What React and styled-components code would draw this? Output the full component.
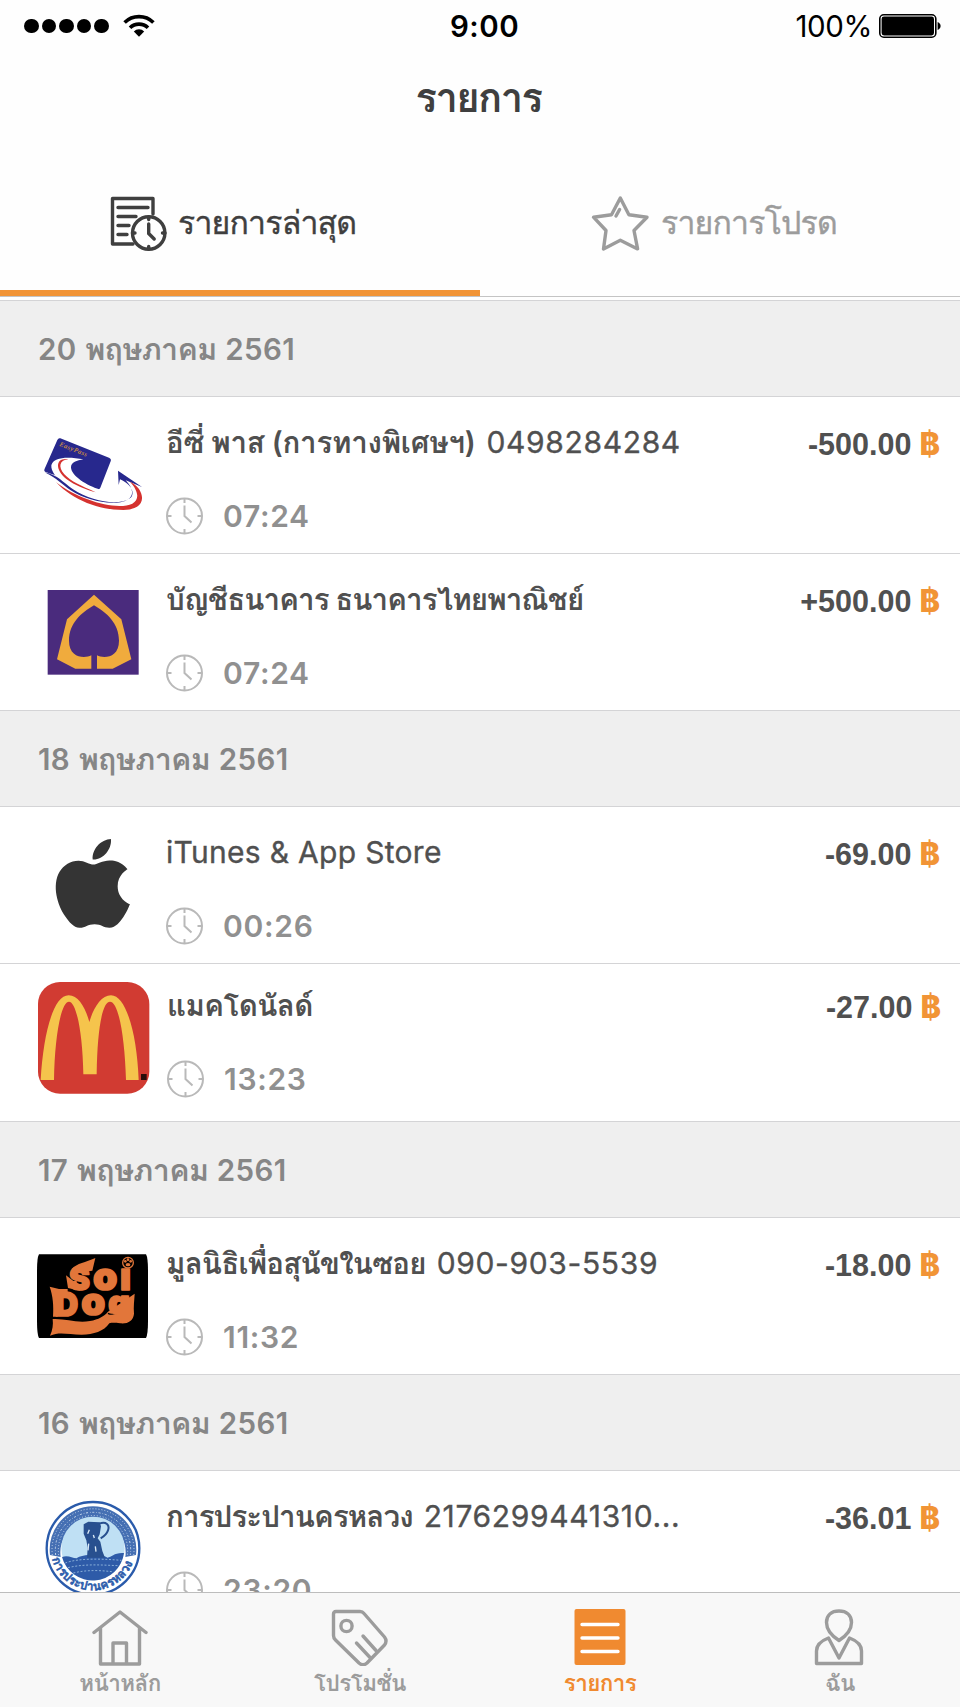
import React, { useState } from "react";
import styled, { createGlobalStyle } from "styled-components";

const Colors = {
  primary: "#f19436",
  active: "#f08a30",
  heading: "#3f3f3f",
  text: "#505050",
  muted: "#909090",
  icon: "#9c9c9c",
  section: "#efefef",
  border: "#d4d4d6",
  bar: "#f8f8f8",
};

const GlobalStyle = createGlobalStyle`
  * {
    box-sizing: border-box;
  }

  body {
    margin: 0;
    background: #fff;
    font-family: Inter, Loma, sans-serif;
  }
`;

const Screen = styled.div`
  width: 960px;
  height: 1707px;
  display: flex;
  flex-direction: column;
  overflow: hidden;
  background: #fefefe;
`;

const StatusBar = styled.div`
  height: 52px;
  padding: 0 19px 0 24px;
  display: grid;
  grid-template-columns: 1fr auto 1fr;
  align-items: center;
  color: #000;
  font-size: 29.5px;
  line-height: 52px;
`;

const StatusSide = styled.div`
  display: flex;
  align-items: center;
  justify-content: ${(p) => (p.$right ? "flex-end" : "flex-start")};
  gap: ${(p) => (p.$right ? "7px" : "14px")};
  letter-spacing: -0.4px;
`;

const SignalDots = styled.div`
  display: flex;
  gap: 3px;
`;

const Dot = styled.span`
  width: 14.6px;
  height: 14.6px;
  border-radius: 50%;
  background: #000;
`;

const Clock = styled.div`
  padding-left: 4px;
  font-weight: 600;
  letter-spacing: 0.5px;
`;

const Title = styled.h1`
  height: 112px;
  margin: 0;
  padding: 18px 3px 0 0;
  text-align: center;
  color: ${Colors.heading};
  font-size: 40px;
  font-weight: 600;
  line-height: 56px;
  letter-spacing: -1.6px;
`;

const Tabs = styled.div`
  height: 133px;
  display: flex;
  border-bottom: 1px solid #c4c4c4;
`;

const Tab = styled.button`
  width: 50%;
  height: 132px;
  display: flex;
  align-items: center;
  gap: ${(p) => (p.$active ? "11px" : "10px")};
  padding: 0 0 9px ${(p) => (p.$active ? "109px" : "111px")};
  border: 0;
  border-bottom: 6px solid ${(p) => (p.$active ? Colors.primary : "transparent")};
  background: none;
  color: ${(p) => (p.$active ? Colors.heading : Colors.icon)};
  font-family: inherit;
  font-size: 32px;
  line-height: 48px;
  letter-spacing: -0.8px;
  -webkit-text-stroke: 0.4px currentColor;
`;

const List = styled.div`
  flex: 1;
  min-height: 0;
  margin-top: 3px;
  overflow: hidden;
`;

const SectionHeader = styled.h2`
  height: 96px;
  margin: 0;
  padding: 1px 38px 0;
  display: flex;
  align-items: center;
  gap: 8.5px;
  border-top: 1px solid ${Colors.border};
  background: ${Colors.section};
  color: #868686;
  font-size: 29.5px;
  font-weight: 600;
  line-height: 40px;
  letter-spacing: 0.4px;
`;

const Month = styled.span`
  font-size: 30.5px;
  letter-spacing: -0.7px;
`;

const Row = styled.div`
  height: 157.15px;
  padding: ${(p) => (p.$raised ? "0 19px 8px 38px" : "0 20px 0 37px")};
  display: flex;
  align-items: center;
  border-top: 1px solid ${Colors.border};
  background: #fff;
`;

const Logo = styled.svg`
  flex: none;
  width: 112px;
  height: 112px;
`;

const Details = styled.div`
  flex: 1;
  height: 112px;
  padding-left: 17px;
  display: flex;
  flex-direction: column;
`;

const Name = styled.div`
  margin-top: 2px;
  color: ${Colors.text};
  font-size: 30px;
  line-height: 42px;
  white-space: nowrap;
`;

const ThaiName = styled.span`
  font-size: 29.5px;
  font-weight: 600;
  letter-spacing: ${(p) => p.$spacing ?? -0.9}px;
`;

const Reference = styled.span`
  margin-left: ${(p) => (p.$after ? "11px" : 0)};
  letter-spacing: ${(p) => (p.$after ? "0.65px" : "0.3px")};
  -webkit-text-stroke: 0.35px currentColor;
`;

const Time = styled.div`
  margin-top: 34px;
  display: flex;
  align-items: center;
  gap: 19px;
  color: ${Colors.muted};
  font-size: 30px;
  font-weight: 600;
  line-height: 38px;
  letter-spacing: 0.7px;
`;

const Amount = styled.div`
  height: 112px;
  padding-top: 6px;
  display: flex;
  gap: 8px;
  color: ${Colors.text};
  font-family: "Liberation Sans", Arial, sans-serif;
  font-size: 30.5px;
  font-weight: 700;
  line-height: 38px;
`;

const Baht = styled.span`
  color: ${Colors.primary};
  font-family: Inter, sans-serif;
  font-size: 31px;
  font-weight: 800;
`;

const TabBar = styled.nav`
  flex: none;
  height: 115px;
  display: flex;
  border-top: 1px solid #bdbdbd;
  background: ${Colors.bar};
`;

const TabBarItem = styled.button`
  flex: 1;
  display: flex;
  flex-direction: column;
  align-items: center;
  padding: 15px 0 0;
  border: 0;
  background: none;
  color: ${(p) => (p.$active ? Colors.active : Colors.icon)};
  font-family: inherit;
  font-size: 22.5px;
  font-weight: 600;
  line-height: 33px;
  letter-spacing: -0.6px;
`;

const WifiIcon = () => (
  <svg width="32" height="24" viewBox="0 0 32 24">
    <g fill="none" stroke="#000" strokeWidth="3.6">
      <path d="M1.6 8.6a20.4 20.4 0 0 1 28.8 0" />
      <path d="M7 13.8a12.8 12.8 0 0 1 18 0" />
    </g>
    <path d="M10.8 17.4a7.4 7.4 0 0 1 10.4 0L16 22.8z" />
  </svg>
);

const BatteryIcon = () => (
  <svg width="62" height="24" viewBox="0 0 62 24">
    <rect x="0.8" y="0.8" width="56" height="22.4" rx="4" fill="#fff" stroke="#000" strokeWidth="1.6" />
    <rect x="2.6" y="2.6" width="52.4" height="18.8" rx="2.4" />
    <path d="M58.6 8c4 1.6 4 6.4 0 8z" />
  </svg>
);

const HistoryIcon = () => (
  <svg width="58" height="58" viewBox="0 0 58 58" fill="none" stroke="currentColor" strokeWidth="3.4" strokeLinecap="round">
    <path d="M44 20V4.5H3.5v45.5H24" strokeLinejoin="round" />
    <path d="M9 13.5h30M9 22.5h18M9 31.5h11M9 40.5h9" />
    <circle cx="39.7" cy="39" r="16.2" />
    <path d="M39.7 30v9.5l5.5 5.5M39.7 23v2.5M39.7 52.5v2.5M23.5 39h2.5M53.5 39h2.5" />
  </svg>
);

const StarIcon = () => (
  <svg width="60" height="58" viewBox="0 0 60 58" fill="none" stroke="currentColor" strokeWidth="3.4" strokeLinejoin="round" strokeLinecap="round">
    <path d="M29.3 4l8.6 16.8L56 23.2 43 36.5l3.6 18.4-17.3-8.7L12.5 54.9 15 36.5 2.5 23.2l18-2.4z" />
    <path d="M28.6 15.5l-3.6 6.5" />
  </svg>
);

const ClockIcon = () => (
  <svg width="38" height="38" viewBox="0 0 38 38" fill="none" stroke="#b9b9b9" strokeWidth="2">
    <circle cx="18.5" cy="19" r="17.5" />
    <path d="M18.5 8.5V19l7 6.500M18.5 1.500v4.500M18.5 32v4.500M1 19h4.500M31.500 19H36" />
  </svg>
);

const EasyPassLogo = () => (
  <Logo viewBox="111 86 336 336">
    <path d="M181 144l146 58q8 4 5 11l-31 79q-3 7-9 5l-153-51q-9-3-5-11l38-86q3-7 9-5z" fill="#27288d" />
    <path d="M250 207c-44-8-90-8-96 18-3 34 60 85 150 105l50-14-53-18c-40-11-88-42-88-67 0-15 18-21 37-24z" fill="#fff" />
    <path d="M205 207c-38-6-42 30-6 59 26 20 58 31 88 40-44-20-74-32-94-54-20-23-14-43 12-45z" fill="#d5322f" />
    <path d="M134 246c42 10 52 28 85 51 58 38 139 51 172 26 12-10 7-31-9-43-8-6-16-11-22-13l-4 17-2-43 72 49-49-20c23 23 26 47 6 58-40 21-120 5-171-28-24-16-42-37-78-54z" fill="#27288d" />
    <path d="M168 276c52 55 129 83 202 83 48 0 70-26 47-63-9-12-17-18-27-22 25 27 30 53 7 66-47 22-159-10-229-64z" fill="#d5322f" />
    <text x="177" y="166" transform="rotate(22 177 166)" fill="#c98b45" fontFamily="Liberation Serif, serif" fontStyle="italic" fontWeight="700" fontSize="20" textLength="88">EasyPass</text>
  </Logo>
);

const ScbLogo = () => (
  <Logo viewBox="111 558 336 336">
    <rect x="143" y="600" width="273" height="254" fill="#4a2b7d" />
    <path d="M282 614l82 74 30 120-56 28h-47v-40c19 10 66 9 66-44 0-52-37-84-75-106-38 22-75 54-75 106 0 53 48 54 67 44v40h-48l-55-28 30-120z" fill="#f0ab3d" />
  </Logo>
);

const AppleLogo = () => (
  <Logo viewBox="111 86 336 336">
    <path
      transform="translate(142 116) scale(11.37 11.1)"
      fill="#343434"
      d="M12.152 6.896c-.948 0-2.415-1.078-3.96-1.04-2.04.027-3.91 1.183-4.961 3.014-2.117 3.675-.546 9.103 1.519 12.09 1.013 1.454 2.208 3.09 3.792 3.039 1.52-.065 2.09-.987 3.935-.987 1.831 0 2.35.987 3.96.948 1.637-.026 2.676-1.48 3.676-2.948 1.156-1.688 1.636-3.325 1.662-3.415-.039-.013-3.182-1.221-3.22-4.857-.026-3.04 2.48-4.494 2.597-4.559-1.429-2.09-3.623-2.324-4.39-2.376-2-.156-3.675 1.09-4.61 1.09zM15.53 3.83c.843-1.012 1.4-2.427 1.245-3.83-1.207.052-2.662.805-3.532 1.818-.78.896-1.454 2.338-1.273 3.714 1.338.104 2.715-.688 3.559-1.701"
    />
  </Logo>
);

const McDonaldsLogo = () => (
  <Logo viewBox="114 546 336 336">
    <rect x="114" y="546" width="334" height="335" rx="66" fill="#d13b32" />
    <path d="M122 840c8-140 38-254 84-254 29 0 50 36 62 80 13-44 36-80 65-80 45 0 78 114 83 254h-38c-4-130-22-235-48-235-22 0-38 75-40 218h-40c-2-130-22-218-43-218-24 0-43 105-45 235z" fill="#f5c44c" />
    <rect x="423" y="822" width="17" height="18" fill="#2a0d0b" />
  </Logo>
);

const SoiDogLogo = () => (
  <Logo viewBox="111 58 336 336">
    <path d="M117 101h321q6 10 6 50v150q0 40-6 51H117q-6-10-6-51V151q0-40 6-50z" fill="#000" />
    {/* tail under the D, sweeping up to the g */}
    <path d="M158 295c40-2 70 13 112 6 26-5 42-14 54-28l80-54c-1 20-4 38-2 60-2 21-18 31-41 29-16-1-22-3-33 0-16 24-47 34-83 34-40 0-66-10-95 3 8-17 10-33 8-50z" fill="#e2763a" />
    {/* flag corners of the S and the D */}
    <path d="M214 146c18-20 42-20 72-34l-9 38-40 6z" fill="#e2763a" />
    <path d="M149 198l28 7h26v14h-30v69h-14c2-34 0-61-10-90z" fill="#e2763a" />
    <path d="M198 164l26 20 24 10-8 16-36-8z" fill="#e2763a" />
    <path d="M324 278c10 6 24 2 32-4" fill="none" stroke="#000" strokeWidth="4" />
    <g fill="#e2763a" stroke="#e2763a" strokeWidth="5" strokeLinejoin="round" fontFamily="Inter, sans-serif" fontWeight="900">
      <text>
        <tspan x="207" y="207" fontSize="94">S</tspan>
        <tspan x="279" y="208" fontSize="117">o</tspan>
        <tspan x="360" y="207" fontSize="112">ı</tspan>
      </text>
      <text>
        <tspan x="164" y="286" fontSize="97">D</tspan>
        <tspan x="244" y="284" fontSize="115">o</tspan>
        <tspan x="325" y="280" fontSize="100">g</tspan>
      </text>
    </g>
    <circle cx="384" cy="126" r="16" fill="#000" stroke="#e2763a" strokeWidth="4" />
    <g fill="#e2763a">
      <circle cx="376" cy="122" r="4" />
      <circle cx="384" cy="117" r="4" />
      <circle cx="392" cy="122" r="4" />
      <ellipse cx="384" cy="132" rx="7" ry="5" />
    </g>
  </Logo>
);

const WaterworksLogo = () => (
  <Logo viewBox="111 98 336 336">
    <circle cx="279" cy="264" r="139" fill="#fff" stroke="#2a5bab" strokeWidth="7" />
    <path d="M150 284A130 130 0 1 1 408 284L376 290A98 98 0 1 0 182 290Z" fill="#456fb3" />
    <g fill="none" stroke="#c7d8ec" strokeWidth="3">
      <path d="M157 284A123 123 0 1 1 401 284" strokeDasharray="3 6" />
      <path d="M167 284A113 113 0 1 1 391 284" strokeDasharray="6 6 2 5" />
      <path d="M176 284A104 104 0 1 1 382 284" strokeDasharray="3 6" />
    </g>
    <circle cx="279" cy="264" r="95" fill="#bfe0f4" />
    <path d="M186 290c20-6 30 4 44 4 14-14 80-14 92-2 14-2 20-16 50-14a95 95 0 0 1-186 12z" fill="#2e5ba8" />
    <path d="M196 308c40-16 120-12 168-8M204 322c50-12 100-8 150-6M220 338c40-10 80-8 116-4" fill="none" stroke="#88aed8" strokeWidth="3" strokeDasharray="6 5" />
    <path d="M251 192l14-8 34 2 4 12-4 24-6 12 8 10 6 28 8 20h-54l2-30-4-22-8-20z" fill="#28508f" />
    <path d="M298 190c20-8 32 4 26 20-4 12-12 18-22 24" fill="none" stroke="#28508f" strokeWidth="6" />
    <path d="M268 208l-5 12M280 224l3 9M266 250l-2 20M286 258l2 16" stroke="#dcebf6" strokeWidth="4" />
    <path id="seal" d="M156 295A127 127 0 0 0 402 295" fill="none" />
    <text fill="#2a5bab" stroke="#2a5bab" strokeWidth="1.5" fontFamily="Loma, sans-serif" fontWeight="700" fontSize="37">
      <textPath href="#seal" textLength="322" lengthAdjust="spacingAndGlyphs">การประปานครหลวง</textPath>
    </text>
  </Logo>
);

const HomeIcon = () => (
  <svg width="56" height="58" viewBox="0 0 56 58" fill="none" stroke="currentColor" strokeWidth="3.4" strokeLinecap="round" strokeLinejoin="round">
    <path d="M2 24.5L28 4l26 20.5M8.500 20v36h39V20M21 56V35h13.500v21" />
  </svg>
);

const TagIcon = () => (
  <svg width="58" height="58" viewBox="0 0 58 58" fill="none" stroke="currentColor" strokeWidth="3.4" strokeLinecap="round" strokeLinejoin="round">
    <path d="M5 3.500h24q2.500 0 4 2L53.500 29q3 4 0 8L36 55q-4 3.500-8 0L4.500 32q-2-2-2-4.500V6q0-2.500 2.500-2.500z" />
    <circle cx="15.500" cy="18" r="5.600" />
    <path d="M32 28l13 14.500M25.500 35L39 49.500" />
  </svg>
);

const ListIcon = () => (
  <svg width="52" height="58" viewBox="0 0 52 58">
    <rect x="0.5" y="1" width="51" height="56" rx="2" fill="currentColor" />
    <path d="M8 16.500h36M8 30h36M8 43.500h36" stroke="#fff" strokeWidth="3.400" strokeLinecap="round" />
  </svg>
);

const PersonIcon = () => (
  <svg width="52" height="58" viewBox="0 0 52 58" fill="none" stroke="currentColor" strokeWidth="3.4" strokeLinejoin="round">
    <path d="M25 32.500C18 28 12.500 22 12.500 14.500 12.500 7 17.500 3 25 3s12.500 4 12.500 11.500C37.500 22 32 28 25 32.500z" />
    <path d="M14.500 30L25 50l10.500-20c8 3 12 8 12 13v12.500h-45V43c0-5 4-10 12-13z" />
  </svg>
);

const groups = [
  {
    day: "20",
    items: [
      { logo: EasyPassLogo, name: "อีซี่ พาส (การทางพิเศษฯ)", spacing: -0.25, ref: "0498284284", time: "07:24", amount: "-500.00" },
      { logo: ScbLogo, name: "บัญชีธนาคาร ธนาคารไทยพาณิชย์", time: "07:24", amount: "+500.00" },
    ],
  },
  {
    day: "18",
    items: [
      { logo: AppleLogo, ref: "iTunes & App Store", time: "00:26", amount: "-69.00" },
      { logo: McDonaldsLogo, name: "แมคโดนัลด์", spacing: -0.6, time: "13:23", amount: "-27.00", raised: true },
    ],
  },
  {
    day: "17",
    items: [{ logo: SoiDogLogo, name: "มูลนิธิเพื่อสุนัขในซอย", spacing: -0.8, ref: "090-903-5539", time: "11:32", amount: "-18.00" }],
  },
  {
    day: "16",
    items: [{ logo: WaterworksLogo, name: "การประปานครหลวง", ref: "2176299441310...", time: "23:20", amount: "-36.01" }],
  },
];

const menu = [
  { label: "หน้าหลัก", icon: HomeIcon },
  { label: "โปรโมชั่น", icon: TagIcon },
  { label: "รายการ", icon: ListIcon },
  { label: "ฉัน", icon: PersonIcon },
];

const Transaction = ({ item }) => {
  const ItemLogo = item.logo;
  return (
    <Row $raised={item.raised}>
      <ItemLogo />
      <Details>
        <Name>
          {item.name && <ThaiName $spacing={item.spacing}>{item.name}</ThaiName>}
          {item.ref && <Reference $after={!!item.name}>{item.ref}</Reference>}
        </Name>
        <Time>
          <ClockIcon />
          {item.time}
        </Time>
      </Details>
      <Amount>
        {item.amount}
        <Baht>฿</Baht>
      </Amount>
    </Row>
  );
};

const App = () => {
  const [tab, setTab] = useState("recent");
  const [page, setPage] = useState("รายการ");

  return (
    <Screen>
      <GlobalStyle />
      <StatusBar>
        <StatusSide>
          <SignalDots>
            {[1, 2, 3, 4, 5].map((n) => (
              <Dot key={n} />
            ))}
          </SignalDots>
          <WifiIcon />
        </StatusSide>
        <Clock>9:00</Clock>
        <StatusSide $right>
          100%
          <BatteryIcon />
        </StatusSide>
      </StatusBar>
      <Title>รายการ</Title>
      <Tabs>
        <Tab $active={tab === "recent"} onClick={() => setTab("recent")}>
          <HistoryIcon />
          รายการล่าสุด
        </Tab>
        <Tab $active={tab === "favorite"} onClick={() => setTab("favorite")}>
          <StarIcon />
          รายการโปรด
        </Tab>
      </Tabs>
      <List>
        {groups.map((group) => (
          <React.Fragment key={group.day}>
            <SectionHeader>
              {group.day}
              <Month>พฤษภาคม</Month>
              2561
            </SectionHeader>
            {group.items.map((item) => (
              <Transaction key={item.amount} item={item} />
            ))}
          </React.Fragment>
        ))}
      </List>
      <TabBar>
        {menu.map(({ label, icon: Icon }) => (
          <TabBarItem key={label} $active={page === label} onClick={() => setPage(label)}>
            <Icon />
            {label}
          </TabBarItem>
        ))}
      </TabBar>
    </Screen>
  );
};

export default App;
